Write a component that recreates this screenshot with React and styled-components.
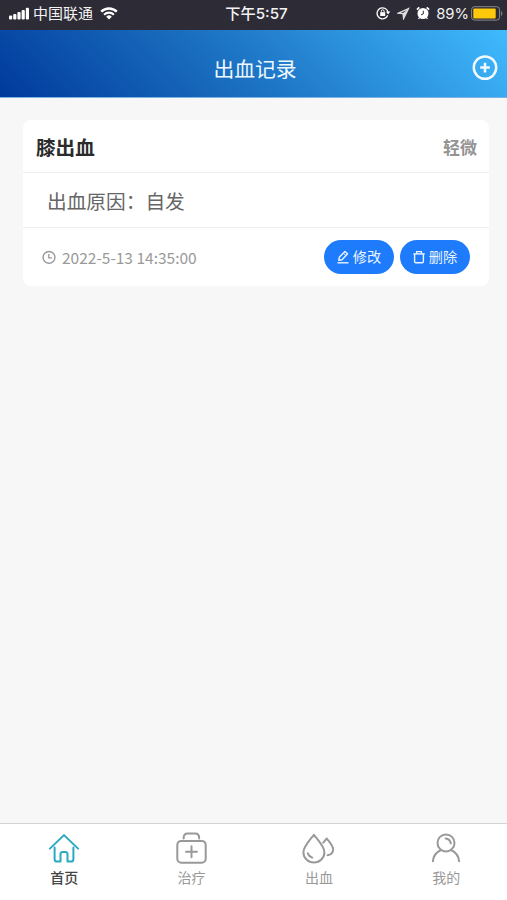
import React from 'react';
import styled, { createGlobalStyle } from 'styled-components';

const record = {
  title: '膝出血',
  level: '轻微',
  reason: '出血原因：自发',
  time: '2022-5-13 14:35:00',
};

const SignalIcon = () => (
  <svg width="21" height="14" viewBox="0 0 21 14" fill="#fff">
    <rect x="0" y="8.6" width="3.2" height="3.9" rx="1" />
    <rect x="4.2" y="7" width="3.2" height="5.5" rx="1" />
    <rect x="8.4" y="5" width="3.2" height="7.5" rx="1" />
    <rect x="12.6" y="3" width="3.2" height="9.5" rx="1" />
    <rect x="16.8" y="0.8" width="3.2" height="11.7" rx="1" />
  </svg>
);

const WifiIcon = () => (
  <svg width="18" height="14" viewBox="0 0 18 14" fill="none" stroke="#fff">
    <path d="M1.2 4.7a11.2 11.2 0 0 1 15.6 0" strokeWidth="2.5" />
    <path d="M4.1 7.7a7 7 0 0 1 9.8 0" strokeWidth="2.2" />
    <path d="M9 12.5 6.2 9.7a4 4 0 0 1 5.6 0Z" fill="#fff" stroke="none" />
  </svg>
);

const LockIcon = () => (
  <svg width="15" height="14" viewBox="0 0 15 14" fill="none" stroke="#fff">
    <path
      d="M10.4 11.3A5.5 5.5 0 1 1 12 6.2M11.7 9.4l-1.3 1.9"
      strokeWidth="1.3"
    />
    <path d="M9.9 5.6h4.4l-2.2 2.9Z" fill="#fff" stroke="none" />
    <rect x="4.2" y="6.2" width="5" height="3.8" fill="#fff" stroke="none" />
    <path d="M5.3 6.5V5.2a1.4 1.4 0 0 1 2.8 0v1.3" strokeWidth="1" />
  </svg>
);

const LocationIcon = () => (
  <svg width="13" height="13" viewBox="0 0 13 13" fill="none" stroke="#ddd">
    <path d="M11.5 1.6 1.3 6.2l4.8.5.5 4.9Z" strokeWidth="1.3" />
    <path d="M11.5 1.6 5.6 6.4l.9 5.2Z" fill="#ddd" stroke="none" />
  </svg>
);

const AlarmIcon = () => (
  <svg width="14" height="14" viewBox="0 0 14 14" fill="none" stroke="#fff">
    <circle cx="7" cy="7.5" r="5.5" fill="#fff" stroke="none" />
    <path d="M.9 3.6 3.3 1.4M13.1 3.6 10.7 1.4" strokeWidth="1.8" />
    <path d="m3.7 11.4-1.2 1.4M10.3 11.4l1.2 1.4" strokeWidth="1.3" />
    <path d="M7.3 4.8v3.1L5 8.9" stroke="#2d2b35" strokeWidth="1" />
  </svg>
);

const BatteryIcon = () => (
  <svg width="32" height="15" viewBox="0 0 32 15" fill="none">
    <rect x=".6" y=".7" width="28" height="13.4" rx="3" stroke="#8b8a8a" />
    <rect x="2.3" y="2.4" width="22.4" height="10" rx="1" fill="#fdc90a" />
    <path d="M30.1 5v5c1.6-.7 1.6-4.3 0-5Z" fill="#8b8a8a" />
  </svg>
);

const AddIcon = () => (
  <svg width="26" height="26" viewBox="0 0 26 26" fill="none" stroke="#f1fbff">
    <circle cx="13" cy="12.6" r="11.2" strokeWidth="2.5" />
    <path d="M13 7.8v9.6M8.2 12.6h9.6" strokeWidth="2.5" />
  </svg>
);

const ClockIcon = () => (
  <svg width="14" height="14" viewBox="0 0 14 14" fill="none" stroke="#999">
    <circle cx="7" cy="7.4" r="5.9" strokeWidth="1.4" />
    <path d="M6.8 4.1v3.7h3.3" strokeWidth="1.3" />
  </svg>
);

const EditIcon = () => (
  <svg width="12" height="14" viewBox="0 0 12 14" fill="none" stroke="#eaf5ff">
    <path
      d="M1.8 10.3 2.3 7.2 7.9 1.5l2.7 2.3L5 9.8Z"
      strokeWidth="1.4"
      strokeLinejoin="round"
    />
    <path d="M6.4 3.2 8.9 5.5" strokeWidth="1" />
    <path d="M.5 12.8h11" strokeWidth="1.4" />
  </svg>
);

const TrashIcon = () => (
  <svg width="12" height="14" viewBox="0 0 12 14" fill="none" stroke="#eaf5ff">
    <path d="M.3 3.9h11.4" strokeWidth="1.4" />
    <path d="M3.6 3.7V1.6h4.8v2.1" strokeWidth="1.3" />
    <path
      d="M1.6 3.9v7.5q0 1.3 1.3 1.3h6.2q1.3 0 1.3-1.3V3.9"
      strokeWidth="1.4"
    />
  </svg>
);

const HomeIcon = () => (
  <TabSvg viewBox="0 0 32 32" stroke="#2ba9c4">
    <path d="M1.9 16.6 16 3.1l14.1 13.5" />
    <path d="M6.6 15.5v11.7q0 2.4 2.4 2.4h3.5v-7.4q0-2.2 2.2-2.2h2.6q2.2 0 2.2 2.2v7.4H23q2.4 0 2.4-2.4V15.5" />
  </TabSvg>
);

const KitIcon = () => (
  <TabSvg viewBox="0 0 32 32" stroke="#999">
    <rect x="2.3" y="8.9" width="28.4" height="21.8" rx="4" />
    <path d="M8.6 6.4q0-4.8 4-4.8h7.6q4 0 4 4.8" />
    <path d="M16.5 14.2v11M11 19.7h11" />
  </TabSvg>
);

const DropsIcon = () => (
  <TabSvg viewBox="0 0 32 32" stroke="#999">
    <path d="M11.9 2.8C8 8 1.4 14.6 1.4 20.3a10.5 10.3 0 0 0 21 0C22.4 14.6 15.8 8 11.9 2.8Z" />
    <path d="M5.8 21.2q1.1 3.4 4.5 4.4" />
    <path d="M21.3 10.7 24.8 6.5C27.4 10 31.2 13.8 31.2 17.6q-.4 4.8-5.6 5.6" />
  </TabSvg>
);

const UserIcon = () => (
  <TabSvg viewBox="0 0 32 32" stroke="#999">
    <circle cx="16" cy="10.9" r="8.5" />
    <path d="M15.7 6.5q4.4.6 5.1 4.8" />
    <path d="M2.9 29.2c.4-5.4 3.2-9 8.3-11.2M29.1 29.2c-.4-5.4-3.2-9-8.3-11.2" />
  </TabSvg>
);

const tabs = [
  { label: '首页', Icon: HomeIcon, active: true },
  { label: '治疗', Icon: KitIcon },
  { label: '出血', Icon: DropsIcon },
  { label: '我的', Icon: UserIcon },
];

const App = () => (
  <Page>
    <GlobalStyle />
    <StatusBar>
      <Carrier>
        <SignalIcon />
        <span>中国联通</span>
        <WifiIcon />
      </Carrier>
      <Clock>下午5:57</Clock>
      <Indicators>
        <LockIcon />
        <LocationIcon />
        <AlarmIcon />
        <Percent>89%</Percent>
        <BatteryIcon />
      </Indicators>
    </StatusBar>
    <Header>
      <Title>出血记录</Title>
      <AddButton aria-label="添加">
        <AddIcon />
      </AddButton>
    </Header>
    <Content>
      <Card>
        <CardHead>
          <h2>{record.title}</h2>
          <span>{record.level}</span>
        </CardHead>
        <Reason>{record.reason}</Reason>
        <CardFoot>
          <ClockIcon />
          <time>{record.time}</time>
          <Actions>
            <PillButton>
              <EditIcon />
              <span>修改</span>
            </PillButton>
            <PillButton>
              <TrashIcon />
              <span>删除</span>
            </PillButton>
          </Actions>
        </CardFoot>
      </Card>
    </Content>
    <TabBar>
      {tabs.map(({ label, Icon, active }) => (
        <Tab key={label} $active={active}>
          <Icon />
          <span>{label}</span>
        </Tab>
      ))}
    </TabBar>
  </Page>
);

const GlobalStyle = createGlobalStyle`
  * {
    box-sizing: border-box;
  }
  body {
    margin: 0;
    font-family: 'Noto Sans CJK SC', sans-serif;
  }
  svg {
    display: block;
    flex-shrink: 0;
  }
`;

const Page = styled.div`
  display: flex;
  flex-direction: column;
  height: 900px;
  overflow: hidden;
  background: #f7f7f7;
`;

const StatusBar = styled.div`
  display: grid;
  grid-template-columns: 1fr auto 1fr;
  align-items: center;
  height: 30px;
  padding: 0 4px 3px 9px;
  background: #2d2b35;
  color: #f2f2f2;
  font-size: 15px;
  line-height: 26px;
`;

const Carrier = styled.div`
  display: flex;
  align-items: center;
  span {
    margin: -1px 7px 0 3px;
  }
`;

const Clock = styled.div`
  margin-left: 1px;
  font-family: Inter, 'Noto Sans CJK SC', sans-serif;
  font-size: 15.2px;
  font-weight: 500;
`;

const Indicators = styled.div`
  display: flex;
  align-items: center;
  justify-content: flex-end;
  gap: 6px;
  svg {
    margin-bottom: 1px;
  }
`;

const Percent = styled.span`
  margin-right: -4px;
  font-family: Inter, sans-serif;
  font-size: 14.8px;
`;

const TabSvg = styled.svg`
  width: 32px;
  height: 32px;
  fill: none;
  stroke-width: 2;
  stroke-linecap: round;
  stroke-linejoin: round;
`;

const Header = styled.header`
  display: grid;
  grid-template-columns: 1fr auto 1fr;
  align-items: center;
  height: 68px;
  padding: 8px 9px 0;
  border-bottom: 1px solid #79b4e4;
  background: linear-gradient(45deg, #003a9b, #1b70c1 45%, #40baff)
    border-box;
`;

const Title = styled.h1`
  grid-column: 2;
  margin: 1px 0 0 3px;
  color: #eef8ff;
  font-size: 20.8px;
  font-weight: 400;
  line-height: 30px;
`;

const AddButton = styled.button`
  justify-self: end;
  padding: 0;
  border: 0;
  background: none;
`;

const Content = styled.main`
  flex: 1;
  padding: 22px 18px 0 23px;
`;

const Card = styled.section`
  border-radius: 8px;
  background: #fff;
`;

const CardHead = styled.div`
  display: flex;
  align-items: center;
  justify-content: space-between;
  height: 53px;
  padding: 1px 12px 0 13px;
  border-bottom: 1px solid #eee;
  h2 {
    margin: 0;
    color: #2b2b2b;
    font-size: 19.6px;
    font-weight: 700;
  }
  span {
    color: #949494;
    font-size: 17px;
    font-weight: 700;
  }
`;

const Reason = styled.div`
  height: 55px;
  padding-left: 24px;
  border-bottom: 1px solid #eee;
  color: #666;
  font-size: 19.7px;
  line-height: 56px;
`;

const CardFoot = styled.div`
  display: flex;
  align-items: center;
  height: 58px;
  padding: 0 19px;
  time {
    margin-left: 6px;
    color: #999;
    font-size: 15.5px;
  }
`;

const Actions = styled.div`
  display: flex;
  gap: 6px;
  margin-left: auto;
`;

const PillButton = styled.button`
  display: flex;
  align-items: center;
  justify-content: center;
  gap: 4px;
  width: 70px;
  height: 34px;
  padding: 0;
  border: 0;
  border-radius: 17px;
  background: #1e7bfb;
  color: #eaf5ff;
  font-family: inherit;
  font-size: 14.2px;
  span {
    margin-top: -2px;
  }
`;

const TabBar = styled.nav`
  display: grid;
  grid-template-columns: repeat(4, 127.4px);
  height: 77px;
  border-top: 1px solid #d4d4d4;
  background: #fff;
`;

const Tab = styled.div`
  display: flex;
  flex-direction: column;
  align-items: center;
  padding-top: 8px;
  color: ${({ $active }) => ($active ? '#444' : '#999')};
  font-size: 14px;
  font-weight: ${({ $active }) => ($active ? 500 : 400)};
  line-height: 20px;
  span {
    margin: 3px 0 0 1px;
  }
`;

export default App;
